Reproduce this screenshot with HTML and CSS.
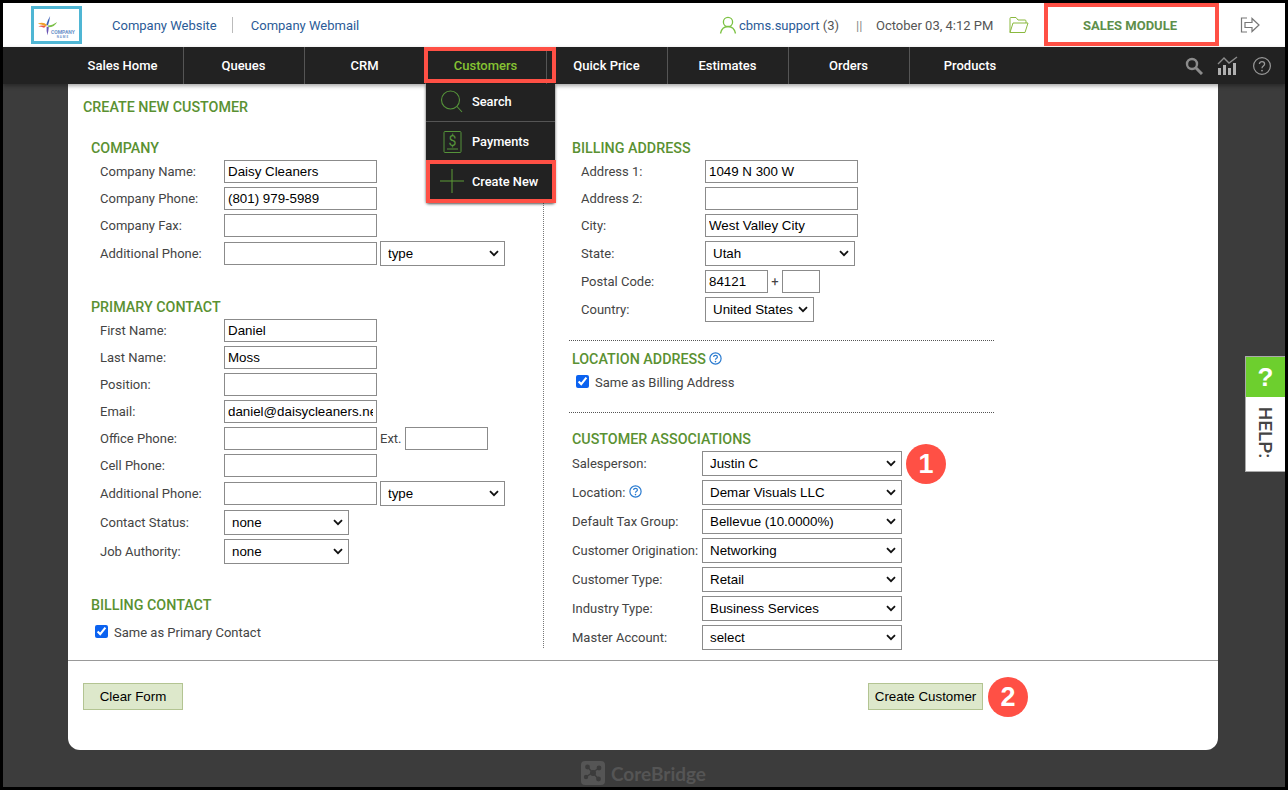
FILE: index.html
```html
<!DOCTYPE html>
<html lang="en">
<head>
<meta charset="utf-8">
<title>Create New Customer</title>
<link rel="stylesheet" href="styles.css">
</head>
<body>
<div class="frame">
  <header class="top">
    <div class="logo">
      <svg class="logo-mark" viewBox="0 0 24 24" width="21" height="23">
        <path d="M15 1 Q14 8 12.5 12 L10.5 11 Q12 6 15 1 Z" fill="#3b5fb8"/>
        <path d="M1 10 Q7 7 11.5 11.5 L10 13 Q6 10.5 1 10 Z" fill="#f0a02c"/>
        <path d="M1.5 13 Q6 11 10 13 L8 14.5 Q5 13 1.5 13 Z" fill="#e8554a"/>
        <path d="M12.5 12 Q17 12 23 8 Q20 14 13 14 Z" fill="#7cc04a"/>
        <path d="M11 13 L13.5 14 Q13 19 12 23 Q10.5 18 11 13 Z" fill="#6a55b5"/>
      </svg>
      <span class="logo-text">COMPANY<small>NAME</small></span>
    </div>
    <a class="top-link">Company Website</a>
    <span class="top-sep"></span>
    <a class="top-link">Company Webmail</a>
    <div class="top-right">
      <svg class="user-ico" viewBox="0 0 18 18" width="18" height="18"><circle cx="9" cy="6" r="4.6" fill="none" stroke="#7cc243" stroke-width="1.3"/><path d="M1.5 17.5 C2.5 12.5 5.5 10.5 9 10.5 C12.5 10.5 15.5 12.5 16.5 17.5" fill="none" stroke="#7cc243" stroke-width="1.3"/></svg>
      <span class="user"><a>cbms.support</a> (3)</span>
      <span class="pipes">||</span>
      <span class="date">October 03, 4:12 PM</span>
      <svg class="folder" viewBox="0 0 20 18" width="20" height="18"><path d="M1 16.5 V2.5 Q1 1.5 2 1.5 H7 L9 4 H16 Q17 4 17 5 V7 M1 16.5 L4 7 H19 L16 16.5 Z" fill="none" stroke="#8ab93f" stroke-width="1"/></svg>
      <div class="module">SALES MODULE</div>
      <svg class="exit" viewBox="0 0 20 18" width="20" height="18"><path d="M7 2 H1.5 V16 H7" fill="none" stroke="#777" stroke-width="1.2"/><path d="M5 6.5 H12 V2.5 L19 9 L12 15.5 V11.5 H5 Z" fill="none" stroke="#777" stroke-width="1.2"/></svg>
    </div>
  </header>

  <nav class="nav">
    <a class="nav-item">Sales Home</a>
    <a class="nav-item">Queues</a>
    <a class="nav-item">CRM</a>
    <a class="nav-item active">Customers</a>
    <a class="nav-item">Quick Price</a>
    <a class="nav-item">Estimates</a>
    <a class="nav-item">Orders</a>
    <a class="nav-item last">Products</a>
    <div class="nav-icons">
      <svg viewBox="0 0 18 18" width="18" height="18"><circle cx="7" cy="7" r="5" fill="none" stroke="#8c8c8c" stroke-width="2.4"/><path d="M11 11 L17 17" stroke="#8c8c8c" stroke-width="3"/></svg>
      <svg viewBox="0 0 22 19" width="22" height="19"><path d="M1 8 L7 2 L12 7 L20 1" fill="none" stroke="#8c8c8c" stroke-width="1.4"/><path d="M1 12 h3 v7 h-3z M6 9 h3 v10 h-3z M11 12 h3 v7 h-3z M16 7 h3 v12 h-3z" fill="#b0b0b0"/></svg>
      <svg viewBox="0 0 18 18" width="18" height="18"><circle cx="9" cy="9" r="8.4" fill="none" stroke="#999" stroke-width="1.2"/><path d="M6.4 7 C6.4 3.8 11.6 3.8 11.6 7 C11.6 9 9 9 9 11.2" fill="none" stroke="#999" stroke-width="1.3"/><circle cx="9" cy="13.6" r="0.9" fill="#999"/></svg>
    </div>
  </nav>

  <main class="stage">
    <section class="card">
      <h1 class="title">CREATE NEW CUSTOMER</h1>
      <div class="cols">
        <div class="col-left">
          <h2 class="head">COMPANY</h2>
          <div class="row"><label class="lab">Company Name:</label><input class="inp" value="Daisy Cleaners"></div>
          <div class="row"><label class="lab">Company Phone:</label><input class="inp" value="(801) 979-5989"></div>
          <div class="row"><label class="lab">Company Fax:</label><input class="inp"></div>
          <div class="row tall"><label class="lab">Additional Phone:</label><input class="inp"><select class="sel w125"><option>type</option></select></div>

          <h2 class="head gap">PRIMARY CONTACT</h2>
          <div class="row"><label class="lab">First Name:</label><input class="inp" value="Daniel"></div>
          <div class="row"><label class="lab">Last Name:</label><input class="inp" value="Moss"></div>
          <div class="row"><label class="lab">Position:</label><input class="inp"></div>
          <div class="row"><label class="lab">Email:</label><input class="inp" value="daniel@daisycleaners.net"></div>
          <div class="row"><label class="lab">Office Phone:</label><input class="inp"><span class="ext">Ext.</span><input class="inp w83"></div>
          <div class="row"><label class="lab">Cell Phone:</label><input class="inp"></div>
          <div class="row tall"><label class="lab">Additional Phone:</label><input class="inp"><select class="sel w125"><option>type</option></select></div>
          <div class="row tall"><label class="lab">Contact Status:</label><select class="sel w125 flush"><option>none</option></select></div>
          <div class="row tall"><label class="lab">Job Authority:</label><select class="sel w125 flush"><option>none</option></select></div>

          <h2 class="head gap">BILLING CONTACT</h2>
          <label class="check first"><input type="checkbox" checked>Same as Primary Contact</label>
        </div>

        <div class="col-right">
          <h2 class="head">BILLING ADDRESS</h2>
          <div class="row"><label class="lab">Address 1:</label><input class="inp" value="1049 N 300 W"></div>
          <div class="row"><label class="lab">Address 2:</label><input class="inp"></div>
          <div class="row"><label class="lab">City:</label><input class="inp" value="West Valley City"></div>
          <div class="row tall"><label class="lab">State:</label><select class="sel w150 flush"><option>Utah</option></select></div>
          <div class="row"><label class="lab">Postal Code:</label><input class="inp w63" value="84121"><span class="plus">+</span><input class="inp w38"></div>
          <div class="row tall"><label class="lab">Country:</label><select class="sel w109 flush"><option>United States</option></select></div>
          <hr class="dots">
          <h2 class="head">LOCATION ADDRESS<svg class="qm head-qm" viewBox="0 0 13 13" width="13" height="13"><circle cx="6.5" cy="6.5" r="5.6" fill="none" stroke="#2a7bd0" stroke-width="1.2"/><path d="M4.6 5 C4.6 2.8 8.4 2.8 8.4 5 C8.4 6.4 6.5 6.3 6.5 7.8" fill="none" stroke="#2a7bd0" stroke-width="1.2"/><circle cx="6.5" cy="9.6" r="0.8" fill="#2a7bd0"/></svg></h2>
          <label class="check"><input type="checkbox" checked>Same as Billing Address</label>
          <hr class="dots second">
          <h2 class="head assoc">CUSTOMER ASSOCIATIONS</h2>
          <div class="arow"><label class="alab">Salesperson:</label><select class="sel asel"><option>Justin C</option></select><span class="badge">1</span></div>
          <div class="arow"><label class="alab">Location: <svg class="qm" viewBox="0 0 13 13" width="13" height="13"><circle cx="6.5" cy="6.5" r="5.6" fill="none" stroke="#2a7bd0" stroke-width="1.2"/><path d="M4.6 5 C4.6 2.8 8.4 2.8 8.4 5 C8.4 6.4 6.5 6.3 6.5 7.8" fill="none" stroke="#2a7bd0" stroke-width="1.2"/><circle cx="6.5" cy="9.6" r="0.8" fill="#2a7bd0"/></svg></label><select class="sel asel"><option>Demar Visuals LLC</option></select></div>
          <div class="arow"><label class="alab">Default Tax Group:</label><select class="sel asel"><option>Bellevue (10.0000%)</option></select></div>
          <div class="arow"><label class="alab">Customer Origination:</label><select class="sel asel"><option>Networking</option></select></div>
          <div class="arow"><label class="alab">Customer Type:</label><select class="sel asel"><option>Retail</option></select></div>
          <div class="arow"><label class="alab">Industry Type:</label><select class="sel asel"><option>Business Services</option></select></div>
          <div class="arow"><label class="alab">Master Account:</label><select class="sel asel"><option>select</option></select></div>
        </div>
      </div>
      <footer class="foot">
        <button class="btn clear">Clear Form</button>
        <div class="create-wrap">
          <button class="btn create">Create Customer</button>
          <span class="badge big">2</span>
        </div>
      </footer>
    </section>
    <div class="brand">
      <svg viewBox="0 0 24 24" width="24" height="24"><rect width="24" height="24" rx="4" fill="#555"/><g fill="#3c3c3c"><circle cx="6.5" cy="6" r="2.4"/><circle cx="18" cy="7" r="2.4"/><circle cx="5" cy="16" r="2.2"/><circle cx="17.5" cy="18" r="2.4"/><circle cx="12" cy="12" r="3"/></g><path d="M6.5 6 L17.5 18 M18 7 L5 16" stroke="#3c3c3c" stroke-width="1.4"/></svg>
      <span>CoreBridge</span>
    </div>
  </main>

  <div class="menu">
    <a class="menu-item"><svg viewBox="0 0 24 24" width="24" height="24"><circle cx="10.5" cy="10" r="9" fill="none" stroke="#55933a" stroke-width="1.1"/><path d="M17 16.5 L22 22" stroke="#55933a" stroke-width="1.1"/></svg><span>Search</span></a>
    <a class="menu-item"><svg viewBox="0 0 24 24" width="24" height="24"><rect x="4" y="1.5" width="17" height="21" rx="1" fill="none" stroke="#55933a" stroke-width="1"/><path d="M7 19 H18" stroke="#55933a" stroke-width="1"/><text class="dollar" x="12.5" y="15.5" text-anchor="middle">$</text></svg><span>Payments</span></a>
    <a class="menu-item plain"><svg viewBox="0 0 24 24" width="24" height="24"><path d="M0 12 H24 M12 0 V24" stroke="#5d9c36" stroke-width="1"/></svg><span>Create New</span></a>
  </div>

  <aside class="help">
    <div class="help-q">?</div>
    <div class="help-t"><span>HELP:</span></div>
  </aside>
</div>
<div class="mark mark-cust"></div>
<div class="mark mark-create"></div>
<div class="mark mark-module"></div>
</body>
</html>
```

FILE: styles.css
```css
* { box-sizing: border-box; }
html, body { margin: 0; height: 100%; }
body { background: #000; padding: 3px; font-family: Roboto, "Liberation Sans", sans-serif; font-size: 13px; color: #444; overflow: hidden; position: relative; }
.frame { position: relative; width: 1282px; height: 784px; display: flex; flex-direction: column; background: #3c3c3c; overflow: hidden; }

.top { height: 44px; background: #fff; display: flex; align-items: center; padding-left: 28px; flex: none; }
.logo { width: 51px; height: 38px; border: 3px solid #4fb6d4; display: flex; align-items: center; padding-left: 3px; margin-right: 30px; position: relative; background: #fff; overflow: hidden; }
.logo-mark { flex: none; }
.logo-text { font-size: 5px; line-height: 5px; color: #6c93c9; font-weight: 700; position: absolute; left: 17px; top: 21px; }
.logo-text small { display: block; font-size: 3px; line-height: 4px; text-align: center; letter-spacing: 1px; }
.top-link { color: #2b5b97; font-size: 13px; }
.top-sep { width: 1px; height: 16px; background: #bbb; margin: 0 18px 0 15px; }
.top-right { margin-left: auto; display: flex; align-items: center; height: 100%; }
.user-ico { margin-right: 2px; }
.user { color: #555; width: 117px; }
.user a { color: #2b5b97; }
.pipes { color: #888; width: 20px; }
.date { color: #555; width: 133px; }
.folder { margin-right: 14px; }
.module { width: 174px; height: 100%; display: flex; align-items: center; justify-content: center; color: #5f8f4b; font-weight: 700; font-size: 13px; }
.exit { margin: 0 25px 0 23px; }

.nav { height: 37px; background: #222; display: flex; flex: none; padding-left: 59.5px; position: relative; z-index: 2; box-shadow: 0 2px 4px rgba(0,0,0,.35); }
.nav-item { width: 121px; display: flex; align-items: center; justify-content: center; color: #fff; font-weight: 500; font-size: 13px; border-right: 1px solid #555; }
.nav-item.last { border-right: 0; }
.nav-item.active { color: #86c232; }
.nav-icons { margin-left: auto; display: flex; align-items: center; gap: 14px; padding-right: 14px; }

.stage { flex: 1; display: flex; flex-direction: column; align-items: center; min-height: 0; padding-right: 2px; }
.card { width: 1150px; height: 666px; background: #fff; border-radius: 0 0 12px 12px; flex: none; margin-right: 0; }
.title { margin: 0 0 8px; padding: 13px 0 0 15px; height: 33px; line-height: 20px; font-size: 14.3px; font-weight: 500; color: #5a9132; }
.cols { display: flex; height: 523px; }
.col-left { width: 476px; padding: 13px 0 0 23px; border-right: 1px dotted #777; height: 523px; }
.col-right { padding: 13px 0 0 28px; width: 470px; }

.head { margin: 0; height: 20px; line-height: 20px; font-size: 14.3px; font-weight: 500; color: #5a9132; white-space: nowrap; }
.head.gap { margin-top: 29px; }
.head.assoc { margin-top: 16px; }
.qm { vertical-align: -1px; }
.head-qm { margin-left: 3px; }

.row { height: 27px; display: flex; align-items: center; padding-left: 9px; }
.row.tall { height: 29px; }
.lab { width: 124px; flex: none; }

.inp { width: 153px; height: 23px; border: 1px solid #8b8b8b; background: #fff; padding: 0 3px; font: 13.33px "Liberation Sans", Arial, sans-serif; color: #000; border-radius: 0; outline: 0; flex: none; }
.w83 { width: 83px; }
.w63 { width: 63px; }
.w38 { width: 38px; }
.sel { height: 25px; border: 1px solid #8b8b8b; background: #fff url("data:image/svg+xml,%3Csvg xmlns='http://www.w3.org/2000/svg' width='10' height='7'%3E%3Cpath d='M1 1.2 L5 5.2 L9 1.2' fill='none' stroke='%23111' stroke-width='1.8'/%3E%3C/svg%3E") no-repeat right 5px center; -webkit-appearance: none; appearance: none; padding: 0 16px 0 7px; font: 13.33px "Liberation Sans", Arial, sans-serif; color: #000; border-radius: 0; margin-left: 3px; flex: none; }
.sel.flush { margin-left: 0; }
.w125 { width: 125px; }
.w150 { width: 150px; }
.w109 { width: 109px; }
.ext { width: 28px; padding-left: 3px; flex: none; }
.plus { width: 14px; text-align: center; flex: none; }

.check { display: flex; align-items: center; height: 27px; padding-left: 4px; color: #444; }
.check.first { margin-top: 4px; }
.check input { margin: 0 6px 2px 0; width: 13px; height: 13px; accent-color: #0b62f0; }

.dots { border: 0; border-top: 1px dotted #555; margin: 16px 0 8px -3px; width: 425px; height: 0; }
.dots.second { margin: 16px 0 0 -3px; }

.arow { height: 29px; display: flex; align-items: center; }
.alab { width: 130px; flex: none; white-space: nowrap; }
.asel { width: 200px; margin-left: 0; }
.badge { width: 40px; height: 40px; border-radius: 50%; background: #ff5045; color: #fff; font: 700 27px/40px "Liberation Sans", Arial, sans-serif; text-align: center; margin-left: 4px; flex: none; }

.foot { border-top: 1px solid #999; margin-top: 12px; padding: 22px 15px 0; height: 90px; display: flex; position: relative; }
.btn { height: 27px; background: #dde8cb; border: 1px solid #b3c492; font: 13.33px "Liberation Sans", Arial, sans-serif; color: #000; padding: 0; border-radius: 0; }
.clear { width: 100px; }
.create-wrap { display: flex; align-items: center; margin-left: 685px; height: 27px; }
.create { width: 115px; }
.badge.big { margin-left: 5px; }

.brand { display: flex; align-items: center; gap: 6px; color: #555; font: 700 19px Lato, sans-serif; margin-top: 10px; height: 26px; margin-left: 1px; }

.menu { position: absolute; left: 423px; top: 81px; width: 129px; height: 119px; background: #222; box-shadow: 0 1px 3px rgba(0,0,0,.7); border-radius: 0 0 3px 3px; z-index: 3; }
.menu-item { display: flex; align-items: center; height: 40px; color: #fff; font-weight: 500; font-size: 12.8px; padding-left: 14px; gap: 8px; border-bottom: 1px solid #555; }
.menu-item:first-child { height: 38px; padding-bottom: 2px; }
.menu-item.plain { border-bottom: 0; padding-bottom: 2px; }
.menu-item svg { flex: none; width: 24px; }
.dollar { font: 14px Roboto, sans-serif; fill: #55933a; }

.help { position: absolute; right: 0; top: 353px; width: 40px; height: 116px; background: #fff; border: 1px solid #aaa; border-right: 0; }
.help-q { height: 40px; background: #6dcf2e; color: #fff; text-align: center; font: 700 26px/40px "Liberation Sans", Arial, sans-serif; }
.help-t { height: 74px; display: flex; align-items: center; justify-content: center; padding-bottom: 3px; }
.help-t span { display: block; transform: rotate(90deg); color: #444; font: 500 19px Roboto, sans-serif; white-space: nowrap; }

.mark { position: absolute; border: 4px solid #ff5045; pointer-events: none; z-index: 5; }
.mark-cust { left: 424px; top: 47px; width: 132px; height: 36px; }
.mark-create { left: 426px; top: 160px; width: 130px; height: 43px; }
.mark-module { left: 1044px; top: 3px; width: 175px; height: 43px; }
```
